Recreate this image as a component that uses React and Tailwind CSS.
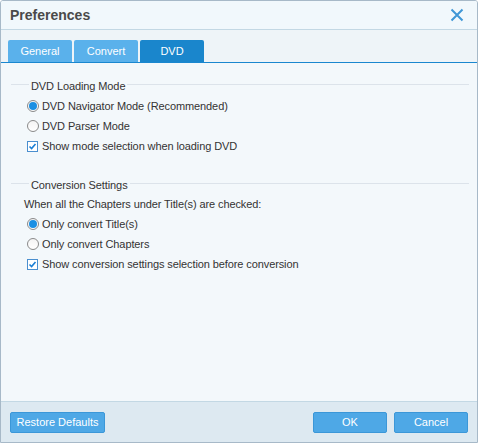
import React from "react";

const font = { fontFamily: '"Liberation Sans", Arial, sans-serif' };
const txt = "text-[11px] tracking-[-0.1px] text-[#333333]";

function Radio({ checked, label }) {
  return (
    <div className="flex items-center h-[20px]">
      <span className="w-[12px] h-[12px] rounded-full border border-[#8a8a8a] bg-gradient-to-b from-[#f4f4f4] to-white flex items-center justify-center ml-[26px]">
        {checked && <span className="w-[8px] h-[8px] rounded-full bg-[#1a8fe3]" />}
      </span>
      <span className={"ml-[3px] " + txt}>{label}</span>
    </div>
  );
}

function Check({ label }) {
  return (
    <div className="flex items-center h-[20px]">
      <span className="w-[11px] h-[11px] border border-[#4a8fcf] bg-white flex items-center justify-center ml-[26px]">
        <svg width="9" height="9" viewBox="0 0 9 9">
          <path d="M1.5 4.5 L3.6 6.6 L7.5 2" stroke="#1a7fd6" strokeWidth="1.6" fill="none" />
        </svg>
      </span>
      <span className={"ml-[4px] " + txt}>{label}</span>
    </div>
  );
}

function GroupTitle({ title, tall }) {
  return (
    <div className={"flex items-start ml-[10px] mr-[8px] " + (tall ? "h-[13px]" : "h-[12px]")}>
      <div className="w-[18px] h-px bg-[#dce3ea] mt-[1px]" />
      <span className={"px-[2px] leading-[14px] -mt-[4px] " + txt}>{title}</span>
      <div className="flex-1 h-px bg-[#dce3ea] mt-[1px]" />
    </div>
  );
}

export default function App() {
  return (
    <div className="w-[480px] h-[445px] bg-white" style={font}>
      <div className="w-[478px] h-[443px] border border-[#a7b9c8] rounded-t-[3px] flex flex-col overflow-hidden">
        <div className="h-[29px] bg-[#f1f8fc] border-b border-[#c3d8e4] flex items-center justify-between px-[9px] shrink-0">
          <span className="text-[14px] font-bold text-[#4a4a4a]">Preferences</span>
          <svg width="14" height="14" viewBox="0 0 14 14" className="mr-[4px]">
            <path d="M1.5 1.5 L12.5 12.5 M12.5 1.5 L1.5 12.5" stroke="#3f97d6" strokeWidth="2" />
          </svg>
        </div>
        <div className="h-[33px] bg-[#eef4f8] border-b border-[#1a87cf] flex items-end pl-[7px] gap-[2px] shrink-0">
          <div className="w-[64px] h-[22px] bg-[#5ab1eb] rounded-t-[2px] flex items-center justify-center text-[11px] text-white">General</div>
          <div className="w-[64px] h-[22px] bg-[#5ab1eb] rounded-t-[2px] flex items-center justify-center text-[11px] text-white">Convert</div>
          <div className="w-[64px] h-[22px] bg-[#1a86cc] rounded-t-[2px] flex items-center justify-center text-[11px] text-white">DVD</div>
        </div>
        <div className="flex-1 bg-[#f3f8fb] pt-[20px]">
          <GroupTitle title="DVD Loading Mode" tall />
          <Radio checked label="DVD Navigator Mode (Recommended)" />
          <Radio label="DVD Parser Mode" />
          <Check label="Show mode selection when loading DVD" />
          <div className="h-[26px]" />
          <GroupTitle title="Conversion Settings" />
          <div className={"h-[20px] flex items-center ml-[23px] " + txt}>When all the Chapters under Title(s) are checked:</div>
          <Radio checked label="Only convert Title(s)" />
          <Radio label="Only convert Chapters" />
          <Check label="Show conversion settings selection before conversion" />
        </div>
        <div className="h-[41px] bg-[#dde9f1] border-t border-[#c3d8e4] flex items-center px-[9px] shrink-0">
          <button className="h-[21px] w-[95px] bg-[#4ea8e6] border border-[#3b97d8] rounded-[2px] text-[11px] text-white">Restore Defaults</button>
          <div className="flex-1" />
          <button className="h-[21px] w-[74px] bg-[#4ea8e6] border border-[#3b97d8] rounded-[2px] text-[11px] text-white">OK</button>
          <button className="h-[21px] w-[74px] ml-[7px] bg-[#4ea8e6] border border-[#3b97d8] rounded-[2px] text-[11px] text-white">Cancel</button>
        </div>
      </div>
    </div>
  );
}
